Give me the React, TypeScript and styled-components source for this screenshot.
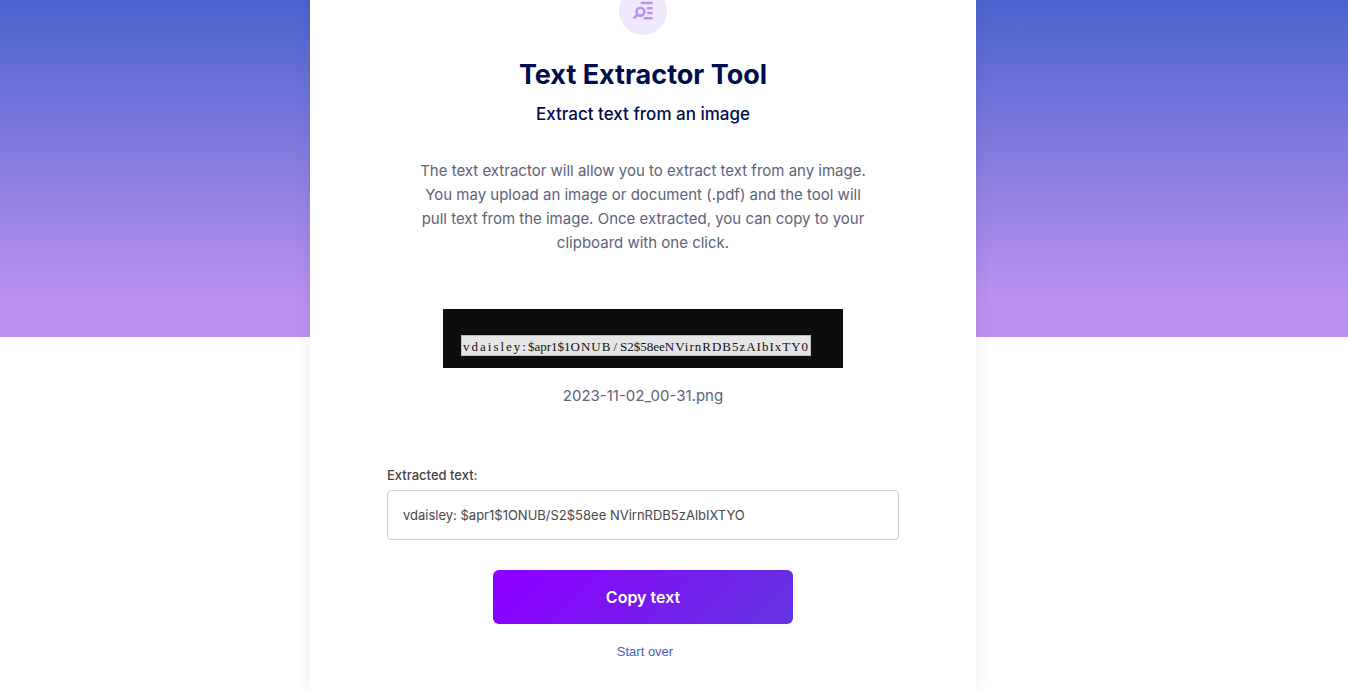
import React from "react";
import styled, { createGlobalStyle } from "styled-components";

const GlobalStyle = createGlobalStyle`
  *, *::before, *::after { box-sizing: border-box; }
  body {
    margin: 0;
    background: #fff;
    font-family: Inter, "Liberation Sans", sans-serif;
  }
`;

const Page = styled.div`
  display: flex;
  justify-content: center;
  min-height: 100vh;
  padding-right: 62px;
  overflow: hidden;
  background: linear-gradient(180deg, #4a64cd 0, #ba91f0 300px, #ba91f0 337px) top / 100% 337px no-repeat;
`;

const Card = styled.main`
  display: flex;
  flex-direction: column;
  align-items: center;
  width: 100%;
  max-width: 666px;
  padding: 0 77px 28px;
  background: #fff;
  box-shadow: 0 0 16px rgba(0, 0, 0, 0.08);
`;

const Badge = styled.div`
  display: grid;
  place-items: center;
  width: 48px;
  height: 48px;
  margin-top: -13px;
  border-radius: 50%;
  background: #f0e8fc;
`;

const Title = styled.h1`
  margin: 22px 0 0;
  color: #000d4d;
  font-size: 27px;
  font-weight: 700;
  line-height: 36px;
`;

const Subtitle = styled.h2`
  margin: 8px 0 0;
  color: #000d4d;
  font-size: 17px;
  font-weight: 500;
  line-height: 26px;
`;

const Description = styled.p`
  max-width: 460px;
  margin: 32px 0 0;
  color: #5e6278;
  font-size: 15px;
  line-height: 24px;
  text-align: center;
`;

const Preview = styled.figure`
  display: flex;
  flex-direction: column;
  align-items: center;
  width: 100%;
  max-width: 400px;
  margin: 54px 0 0;
`;

const Snapshot = styled.div`
  display: flex;
  width: 100%;
  height: 59px;
  padding: 26px 18px 0;
  background: #0d0d0d;
`;

const Highlight = styled.div`
  height: 21px;
  padding: 0 1px;
  border: 1px solid #bdbdbd;
  background: #e6e6e6;
  color: #111;
  font-family: "Liberation Serif", serif;
  font-size: 13px;
  line-height: 21px;
  white-space: nowrap;
`;

const Tracked = styled.span<{ $gap: number }>`
  letter-spacing: ${({ $gap }) => $gap}px;
`;

const FileName = styled.figcaption`
  margin-top: 16px;
  color: #5e6278;
  font-size: 15px;
  line-height: 24px;
`;

const Result = styled.div`
  display: flex;
  flex-direction: column;
  width: 100%;
  margin-top: 57px;
`;

const Label = styled.label`
  color: #444;
  font-size: 13px;
  font-weight: 500;
  line-height: 20px;
`;

const Output = styled.input`
  width: 100%;
  height: 50px;
  margin-top: 5px;
  padding: 0 15px;
  border: 1px solid #ccc;
  border-radius: 4px;
  background: #fff;
  color: #484848;
  font: 400 13px/20px Inter, "Liberation Sans", sans-serif;
`;

const CopyButton = styled.button`
  width: 100%;
  max-width: 300px;
  height: 54px;
  margin-top: 30px;
  border: 0;
  border-radius: 6px;
  background: linear-gradient(135deg, #8c00ff 8%, #6236de 100%);
  color: #fff;
  font: 600 16px/24px Inter, "Liberation Sans", sans-serif;
`;

const StartOver = styled.a`
  margin: 18px 0 0 4px;
  color: #4361c2;
  font: 400 13px/20px "Liberation Sans", Arial, sans-serif;
  text-decoration: none;
`;

const ExtractIcon = () => (
  <svg width="24" height="24" viewBox="0 0 24 24" fill="none" stroke="#ba91f0" strokeWidth="2.6" strokeLinecap="round" aria-hidden="true">
    <circle cx="9.4" cy="12.7" r="3.9" />
    <path d="M6.5 15.6 3.5 18.6M10.9 4H20.6M17 9.2H20.6M17.4 14H20.6M13.9 19.3H20.6" />
  </svg>
);

export default function App() {
  return (
    <>
      <GlobalStyle />
      <Page>
        <Card>
          <Badge><ExtractIcon /></Badge>
          <Title>Text Extractor Tool</Title>
          <Subtitle>Extract text from an image</Subtitle>
          <Description>
            The text extractor will allow you to extract text from any image. You may upload an image or
            document (.pdf) and the tool will pull text from the image. Once extracted, you can copy to your
            clipboard with one click.
          </Description>
          <Preview>
            <Snapshot>
              <Highlight>
                <Tracked $gap={2}>vdaisley:</Tracked>
                <Tracked $gap={0}>$apr1$1</Tracked>
                <Tracked $gap={1}>ONU</Tracked>
                <Tracked $gap={3}>B/</Tracked>
                <Tracked $gap={0}>S2$58ee</Tracked>
                <Tracked $gap={1}>NVirnRDB5zAIbIxTY0</Tracked>
              </Highlight>
            </Snapshot>
            <FileName>2023-11-02_00-31.png</FileName>
          </Preview>
          <Result>
            <Label htmlFor="extracted">Extracted text:</Label>
            <Output id="extracted" type="text" readOnly value="vdaisley: $apr1$1ONUB/S2$58ee NVirnRDB5zAlbIXTYO" />
          </Result>
          <CopyButton type="button">Copy text</CopyButton>
          <StartOver href="#">Start over</StartOver>
        </Card>
      </Page>
    </>
  );
}
